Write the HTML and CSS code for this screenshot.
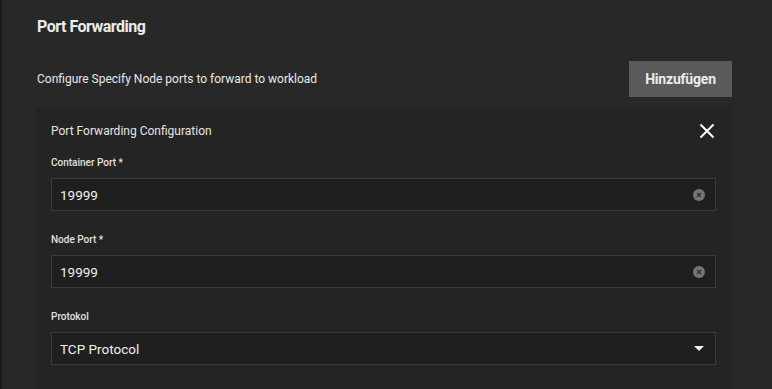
FILE: index.html
```html
<!DOCTYPE html>
<html lang="en">
<head>
    <meta charset="UTF-8">
    <meta name="viewport" content="width=device-width, initial-scale=1.0">
    <title>Port Forwarding</title>
    <link rel="stylesheet" href="styles.css">
</head>
<body>
    <div class="page">
        <h2 class="section-title">Port Forwarding</h2>

        <!-- Header row with description and add button -->
        <div class="list-header">
            <p class="description">Configure Specify Node ports to forward to workload</p>
            <button class="add-btn" type="button">Hinzufügen</button>
        </div>

        <!-- Single forwarding entry -->
        <div class="card">
            <div class="card-header">
                <span class="card-title">Port Forwarding Configuration</span>
                <button class="close-btn" type="button" aria-label="Remove">
                    <svg width="16" height="16" viewBox="0 0 16 16">
                        <path d="M1.5 1.5 L14.5 14.5 M14.5 1.5 L1.5 14.5" stroke="#ffffff" stroke-width="2" fill="none"/>
                    </svg>
                </button>
            </div>

            <div class="field">
                <label class="field-label" for="containerPort">Container Port *</label>
                <div class="input-box">
                    <input id="containerPort" type="text" value="19999">
                    <span class="clear-icon">
                        <svg width="12" height="12" viewBox="0 0 12 12">
                            <circle cx="6" cy="6" r="6" fill="#757575"/>
                            <path d="M4 4 L8 8 M8 4 L4 8" stroke="#303030" stroke-width="1.2"/>
                        </svg>
                    </span>
                </div>
            </div>

            <div class="field">
                <label class="field-label" for="nodePort">Node Port *</label>
                <div class="input-box">
                    <input id="nodePort" type="text" value="19999">
                    <span class="clear-icon">
                        <svg width="12" height="12" viewBox="0 0 12 12">
                            <circle cx="6" cy="6" r="6" fill="#757575"/>
                            <path d="M4 4 L8 8 M8 4 L4 8" stroke="#303030" stroke-width="1.2"/>
                        </svg>
                    </span>
                </div>
            </div>

            <div class="field">
                <label class="field-label">Protokol</label>
                <div class="input-box select-box">
                    <span class="select-value">TCP Protocol</span>
                    <span class="arrow"></span>
                </div>
            </div>
        </div>
    </div>
</body>
</html>
```

FILE: styles.css
```css
/* General page styles */
body {
    margin: 0;
    background-color: #1c1c1c;
    font-family: Roboto, "Liberation Sans", sans-serif;
    color: #e6e6e6;
    height: 389px;
    overflow: hidden;
}

.page {
    margin-left: 2px;
    height: 100%;
    background-color: #282828;
    padding: 15px 40px 0 35px;
}

.section-title {
    margin: 0;
    font-size: 16px;
    font-weight: 700;
    letter-spacing: -0.5px;
    line-height: 24px;
    color: #ececec;
}

/* Description + button row */
.list-header {
    display: flex;
    align-items: center;
    justify-content: space-between;
    margin-top: 22px;
}

.description {
    margin: 0;
    font-size: 12px;
    color: #e8e8e8;
}

.add-btn {
    width: 103px;
    height: 36px;
    background-color: #5a5a5a;
    color: #ececec;
    border: none;
    font-family: inherit;
    font-size: 14px;
    font-weight: 700;
    letter-spacing: -0.2px;
    cursor: pointer;
}

/* Card */
.card {
    margin: 10px 1px 0 -1px;
    background-color: #242424;
    padding: 14px 15px 40px 15px;
}

.card-header {
    display: flex;
    align-items: center;
    justify-content: space-between;
    height: 20px;
}

.card-title {
    font-size: 12px;
    color: #e4e4e4;
}

.close-btn {
    background: none;
    border: none;
    padding: 0;
    margin-right: 1px;
    width: 16px;
    height: 16px;
    display: flex;
    cursor: pointer;
}

.field {
    margin-top: 15px;
}

.field + .field {
    margin-top: 22px;
}

.field-label {
    display: block;
    font-size: 10px;
    font-weight: 500;
    color: #e0e0e0;
    line-height: 14px;
    margin-bottom: 8px;
}

.input-box {
    display: flex;
    align-items: center;
    height: 31px;
    background-color: #1f1f1f;
    border: 1px solid #3a3a3a;
    padding: 0 9px 0 8px;
}

.input-box input {
    flex: 1;
    background: transparent;
    border: none;
    outline: none;
    color: #f0f0f0;
    font-family: Roboto, "Liberation Sans", sans-serif;
    font-size: 13.5px;
    padding: 0;
}

.clear-icon {
    display: flex;
    margin-right: 1px;
}

.select-value {
    flex: 1;
    font-size: 13.5px;
    color: #f0f0f0;
}

.arrow {
    width: 0;
    height: 0;
    border-left: 5px solid transparent;
    border-right: 5px solid transparent;
    border-top: 5px solid #f0f0f0;
    margin-right: 2px;
}
```
